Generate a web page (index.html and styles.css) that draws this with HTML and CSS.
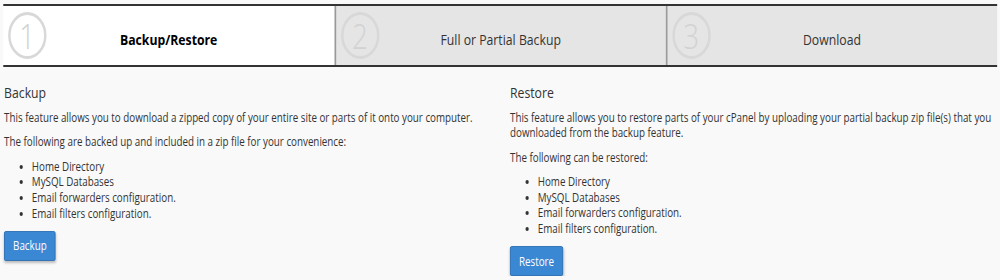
FILE: index.html
```html
<!DOCTYPE html>
<html lang="en">
<head>
<meta charset="utf-8">
<title>Backup Wizard</title>
<link rel="stylesheet" href="styles.css">
</head>
<body>
<div class="viewport">
<div class="page">
  <div class="steps">
    <div class="step step-active"><span class="step-num">1</span><span class="step-label">Backup/Restore</span></div>
    <div class="step"><span class="step-num">2</span><span class="step-label">Full or Partial Backup</span></div>
    <div class="step"><span class="step-num">3</span><span class="step-label">Download</span></div>
  </div>
  <div class="sections">
    <section class="section">
      <h2 class="section-title">Backup</h2>
      <p class="text">This feature allows you to download a zipped copy of your entire site or parts of it onto your computer.</p>
      <p class="text">The following are backed up and included in a zip file for your convenience:</p>
      <ul class="items">
        <li>Home Directory</li>
        <li>MySQL Databases</li>
        <li>Email forwarders configuration.</li>
        <li>Email filters configuration.</li>
      </ul>
      <button class="btn" type="button">Backup</button>
    </section>
    <section class="section">
      <h2 class="section-title">Restore</h2>
      <p class="text">This feature allows you to restore parts of your cPanel by uploading your partial backup zip file(s) that you downloaded from the backup feature.</p>
      <p class="text">The following can be restored:</p>
      <ul class="items">
        <li>Home Directory</li>
        <li>MySQL Databases</li>
        <li>Email forwarders configuration.</li>
        <li>Email filters configuration.</li>
      </ul>
      <button class="btn" type="button">Restore</button>
    </section>
  </div>
</div>
</div>
</body>
</html>
```

FILE: styles.css
```css
html, body {
  margin: 0;
  padding: 0;
  background: #f9f9f9;
  overflow: hidden;
}

.viewport {
  width: 1000px;
  overflow: hidden;
}

.page {
  width: 1225px;
  transform: scaleX(0.816);
  transform-origin: 0 0;
  font-family: "Open Sans", "DejaVu Sans", sans-serif;
  color: #333;
}

.steps {
  display: grid;
  grid-template-columns: repeat(3, 1fr);
  margin: 4px 3.5px 0 3.7px;
  border-top: 2px solid #333;
  border-bottom: 2px solid #333;
}

.step {
  position: relative;
  box-sizing: border-box;
  height: 59px;
  padding-top: 23px;
  background: #e5e5e5;
  text-align: center;
  font-size: 15px;
  line-height: 20px;
  color: #333;
}

.step + .step {
  border-left: 2px solid #9a9a9a;
}

.step-active {
  background: #fff;
  font-weight: bold;
  color: #000;
}

.step-num {
  position: absolute;
  left: 6px;
  top: 6px;
  box-sizing: border-box;
  width: 47px;
  height: 47px;
  border: 3px solid #d8d8d8;
  border-radius: 50%;
  display: flex;
  align-items: center;
  justify-content: center;
  color: #d2d2d2;
  font-size: 34px;
  font-weight: 300;
  line-height: 1;
}

.sections {
  display: grid;
  grid-template-columns: 1fr 1fr;
  column-gap: 25px;
  padding: 15px 5px 0;
}

.section-title {
  margin: 0 0 7.5px;
  font-size: 15px;
  line-height: 20px;
  font-weight: normal;
}

.text {
  margin: 0 0 9px;
  font-size: 12px;
  line-height: 15.5px;
}

.items {
  margin: 0 0 9.5px;
  padding-left: 34px;
  font-size: 12px;
  line-height: 15.7px;
}

.btn {
  display: block;
  height: 30px;
  padding: 0 10px;
  font-family: "Open Sans", "DejaVu Sans", sans-serif;
  font-size: 12px;
  color: #fff;
  background: #3a88d3;
  border: 1px solid #2c6fb3;
  border-radius: 2px;
  box-shadow: 0 2px 3px rgba(0, 0, 0, 0.25);
}
```
